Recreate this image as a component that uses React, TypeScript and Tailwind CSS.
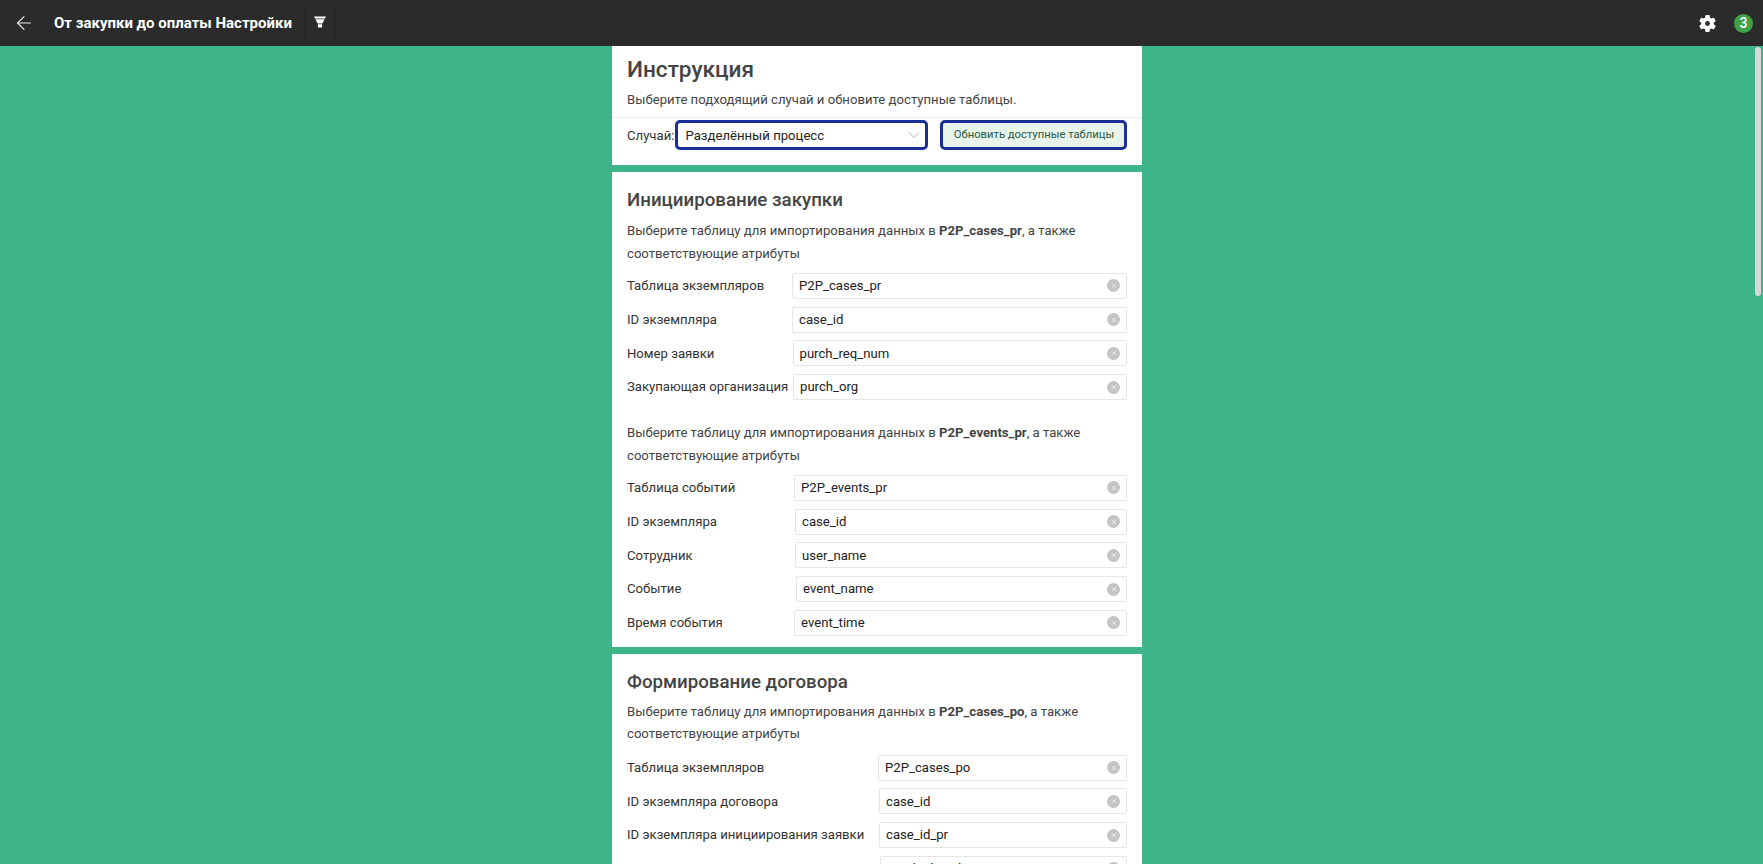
import React from 'react';
import { ArrowLeft, ChevronDown, X } from 'lucide-react';

type Row = { label: string; value: string; left: string };

const Field: React.FC<Row> = ({ label, value, left }) => (
  <div className="flex items-center h-[33.75px]">
    <div className={`${left} shrink-0 text-[13.15px] text-[#333]`}>{label}</div>
    <div className="flex-1 h-[26px] flex items-center justify-between pl-[6px] pr-[6px] bg-white border border-[#e6e6e6] rounded-[2px] text-[13.15px] text-[#222]">
      <span>{value}</span>
      <span className="w-[13px] h-[13px] rounded-full bg-[#c4c4c4] flex items-center justify-center">
        <X size={8} strokeWidth={3} className="text-[#e8e8e8]" />
      </span>
    </div>
  </div>
);

const Hint: React.FC<{ table: string }> = ({ table }) => (
  <p className="text-[13.15px] leading-[22.5px] text-[#444]">
    Выберите таблицу для импортирования данных в <b className="font-bold">{table}</b>, а также<br />соответствующие атрибуты
  </p>
);

const App: React.FC = () => {
  return (
    <div className="h-screen overflow-hidden flex flex-col bg-[#3eb489] font-['Roboto',sans-serif]">
      <header className="h-[46px] shrink-0 flex items-center bg-[#2b2b2b] text-white">
        <ArrowLeft size={22} strokeWidth={1.3} className="ml-[13px] text-[#e8e8e8]" />
        <h1 className="ml-[19px] text-[15px] font-bold">От закупки до оплаты Настройки</h1>
        <div className="ml-[12px] h-[34px] w-[32px] border-x border-[#242424] flex items-center justify-center">
          <svg width="12" height="12" viewBox="0 0 12 12" className="mb-[2px] fill-white">
            <path d="M0 0.5h12l-1 2H1z" />
            <path d="M1.4 3.3h9.2L8.4 7.6H3.6z" />
            <path d="M3.9 8.2h4.2v3.3H3.9z" />
          </svg>
        </div>
        <div className="ml-auto flex items-center">
          <svg width="21" height="21" viewBox="0 0 24 24" fill="white" fillRule="evenodd" className="mr-[16px]">
            <path d="M19.14 12.94c.04-.3.06-.61.06-.94 0-.32-.02-.64-.07-.94l2.03-1.58c.18-.14.23-.41.12-.61l-1.92-3.32c-.12-.22-.37-.29-.59-.22l-2.39.96c-.5-.38-1.03-.7-1.62-.94l-.36-2.54c-.04-.24-.24-.41-.48-.41h-3.84c-.24 0-.43.17-.47.41l-.36 2.54c-.59.24-1.13.57-1.62.94l-2.39-.96c-.22-.08-.47 0-.59.22L2.74 8.87c-.12.21-.08.47.12.61l2.03 1.58c-.05.3-.09.63-.09.94s.02.64.07.94l-2.03 1.58c-.18.14-.23.41-.12.61l1.92 3.32c.12.22.37.29.59.22l2.39-.96c.5.38 1.03.7 1.62.94l.36 2.54c.05.24.24.41.48.41h3.84c.24 0 .44-.17.47-.41l.36-2.54c.59-.24 1.13-.56 1.62-.94l2.39.96c.22.08.47 0 .59-.22l1.92-3.32c.12-.22.07-.47-.12-.61l-2.01-1.58zM12 14.8a2.8 2.8 0 1 1 0-5.6 2.8 2.8 0 0 1 0 5.6z" />
          </svg>
          <span className="w-[19px] h-[19px] mr-[10px] rounded-full bg-[#43a047] text-white text-[14px] font-medium flex items-center justify-center">3</span>
        </div>
      </header>

      <div className="flex-1 min-h-0 relative overflow-hidden">
        <main className="w-[530px] ml-[612px] flex flex-col gap-[7px]">
          <section className="bg-white">
            <div className="h-[72px] px-[15px] pt-[8px] border-b border-[#e4f1ec]">
              <h2 className="text-[22.6px] leading-[32px] font-medium text-[#444]">Инструкция</h2>
              <p className="mt-[6px] text-[13.15px] leading-[16px] text-[#444]">Выберите подходящий случай и обновите доступные таблицы.</p>
            </div>
            <div className="h-[47px] px-[15px] pt-[2px] flex items-start">
              <span className="h-[30px] pt-[1px] flex items-center text-[13.15px] text-[#333]">Случай:</span>
              <div className="ml-[1px] w-[253px] h-[30px] pl-[7px] pr-[1px] flex items-center justify-between border-[3px] border-[#1a2f96] rounded-[5px] text-[13.15px] text-[#222]">
                <span className="pt-[1px]">Разделённый процесс</span>
                <ChevronDown size={20} strokeWidth={1} className="text-[#aaa]" />
              </div>
              <button className="ml-auto w-[187px] h-[30px] pl-[1px] pt-[1px] border-[3px] border-[#1a2f96] rounded-[5px] bg-[#e8f3ea] text-[11.25px] text-[#2c5a45]">Обновить доступные таблицы</button>
            </div>
          </section>

          <section className="bg-white px-[15px] pt-[16px] pb-[7px]">
            <h3 className="text-[18.72px] leading-[24px] font-medium text-[#444] mb-[8px]">Инициирование закупки</h3>
            <Hint table="P2P_cases_pr" />
            <div className="mt-[4px]">
              <Field label="Таблица экземпляров" value="P2P_cases_pr" left="w-[165px]" />
              <Field label="ID экземпляра" value="case_id" left="w-[165px]" />
              <Field label="Номер заявки" value="purch_req_num" left="w-[165.5px]" />
              <Field label="Закупающая организация" value="purch_org" left="w-[166px]" />
            </div>
            <div className="mt-[18px]">
              <Hint table="P2P_events_pr" />
            </div>
            <div className="mt-[4px]">
              <Field label="Таблица событий" value="P2P_events_pr" left="w-[167px]" />
              <Field label="ID экземпляра" value="case_id" left="w-[168px]" />
              <Field label="Сотрудник" value="user_name" left="w-[168px]" />
              <Field label="Событие" value="event_name" left="w-[169px]" />
              <Field label="Время события" value="event_time" left="w-[167px]" />
            </div>
          </section>

          <section className="bg-white px-[15px] pt-[16px] pb-[6px]">
            <h3 className="text-[18.72px] leading-[24px] font-medium text-[#444] mb-[7px]">Формирование договора</h3>
            <Hint table="P2P_cases_po" />
            <div className="mt-[5px]">
              <Field label="Таблица экземпляров" value="P2P_cases_po" left="w-[251px]" />
              <Field label="ID экземпляра договора" value="case_id" left="w-[252px]" />
              <Field label="ID экземпляра инициирования заявки" value="case_id_pr" left="w-[252px]" />
              <Field label="Дата документа" value="purch_doc_date" left="w-[253px]" />
            </div>
          </section>
        </main>
        <div className="absolute right-[2px] top-[1px] w-[6px] h-[249px] rounded-full bg-[#d9d9d9]" />
      </div>
    </div>
  );
};

export default App;
